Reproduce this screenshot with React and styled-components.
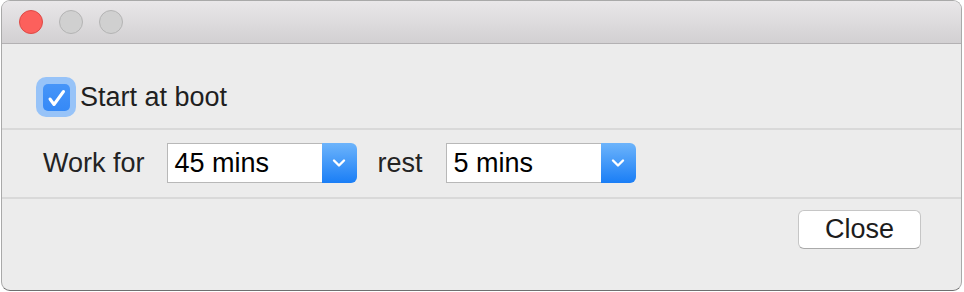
import styled, { createGlobalStyle } from "styled-components";

const GlobalStyle = createGlobalStyle`
  html, body {
    margin: 0;
    padding: 0;
    background: #ffffff;
  }
  body {
    font-family: "Liberation Sans", Arial, sans-serif;
  }
`;

const Window = styled.div`
  box-sizing: border-box;
  margin-left: 1px;
  width: 961px;
  height: 291px;
  border: 1px solid #a9a9a9;
  border-bottom-color: #6f6f6f;
  border-radius: 9px;
  background: #ececec;
  overflow: hidden;
  display: flex;
  flex-direction: column;
`;

const TitleBar = styled.div`
  height: 42px;
  flex: none;
  display: flex;
  align-items: center;
  gap: 16px;
  padding-left: 17px;
  background: linear-gradient(#e9e7e9, #d2d0d2);
  border-bottom: 1px solid #b3b1b3;
`;

const Light = styled.span`
  width: 24px;
  height: 24px;
  border-radius: 50%;
  box-sizing: border-box;
  background: ${(p) => (p.$red ? "#fc605c" : "#d0d0d0")};
  border: 1px solid ${(p) => (p.$red ? "#de4a46" : "#b4b4b4")};
`;

const Section = styled.div`
  display: flex;
  box-sizing: border-box;
  height: ${(p) => p.$h}px;
  padding: ${(p) => p.$pad || "0"};
  border-bottom: ${(p) => (p.$last ? "none" : "2px solid #d9d9d9")};
  justify-content: ${(p) => p.$justify || "flex-start"};
  align-items: ${(p) => p.$align || "center"};
`;

const CheckRow = styled.label`
  display: flex;
  align-items: center;
  gap: 4px;
  font-size: 27px;
  color: #1f1f1f;
`;

const Focus = styled.span`
  box-sizing: border-box;
  width: 40px;
  height: 40px;
  border-radius: 10px;
  background: #97c3f8;
  display: flex;
  align-items: center;
  justify-content: center;
`;

const Box = styled.span`
  width: 27px;
  height: 27px;
  border-radius: 5px;
  background: linear-gradient(#4795f8, #3589f7);
  display: flex;
  align-items: center;
  justify-content: center;
`;

const Label = styled.span`
  font-size: 27px;
  color: #232323;
`;

const Select = styled.div`
  display: flex;
  box-sizing: border-box;
  width: 190px;
  height: 40px;
  border-radius: 0 6px 6px 0;
  margin: 0 ${(p) => p.$mr || 0}px 0 ${(p) => p.$ml || 0}px;
`;

const Field = styled.div`
  flex: 1;
  box-sizing: border-box;
  background: #ffffff;
  border: 1px solid #b8b8b8;
  border-right: none;
  font-size: 27px;
  color: #000;
  padding-left: 7px;
  display: flex;
  align-items: center;
`;

const Arrow = styled.div`
  width: 35px;
  border-radius: 0 6px 6px 0;
  background: linear-gradient(#6db4fb, #1a7ef6);
  display: flex;
  align-items: center;
  justify-content: center;
`;

const Button = styled.button`
  box-sizing: border-box;
  width: 123px;
  height: 39px;
  border-radius: 6px;
  border: 1px solid #c6c6c6;
  border-bottom-color: #aaaaaa;
  background: #ffffff;
  font-family: "Liberation Sans", Arial, sans-serif;
  font-size: 27px;
  color: #1c1c1c;
  padding: 0;
`;

const Chevron = () => (
  <svg width="14" height="10" viewBox="0 0 14 10">
    <path d="M2 2.5 L7 7.5 L12 2.5" fill="none" stroke="#fff" strokeWidth="2.4" strokeLinecap="round" strokeLinejoin="round" />
  </svg>
);

const Dropdown = ({ value, ml, mr }) => (
  <Select $ml={ml} $mr={mr}>
    <Field>{value}</Field>
    <Arrow>
      <Chevron />
    </Arrow>
  </Select>
);

export default function App() {
  return (
    <>
      <GlobalStyle />
      <Window>
        <TitleBar>
          <Light $red />
          <Light />
          <Light />
        </TitleBar>
        <Section $h={86} $pad="33px 0 0 34px" $align="flex-start">
          <CheckRow>
            <Focus>
              <Box>
                <svg width="27" height="27" viewBox="0 0 27 27">
                  <path d="M7 15 L11 20.5 L20.5 7.5" fill="none" stroke="#fff" strokeWidth="3" strokeLinecap="round" strokeLinejoin="round" />
                </svg>
              </Box>
            </Focus>
            Start at boot
          </CheckRow>
        </Section>
        <Section $h={69} $pad="0 0 1px 41px">
          <Label>Work for</Label>
          <Dropdown value="45 mins" ml={22} mr={21} />
          <Label>rest</Label>
          <Dropdown value="5 mins" ml={23} />
        </Section>
        <Section $last $h={90} $pad="11px 40px 0 0" $justify="flex-end" $align="flex-start">
          <Button>Close</Button>
        </Section>
      </Window>
    </>
  );
}
